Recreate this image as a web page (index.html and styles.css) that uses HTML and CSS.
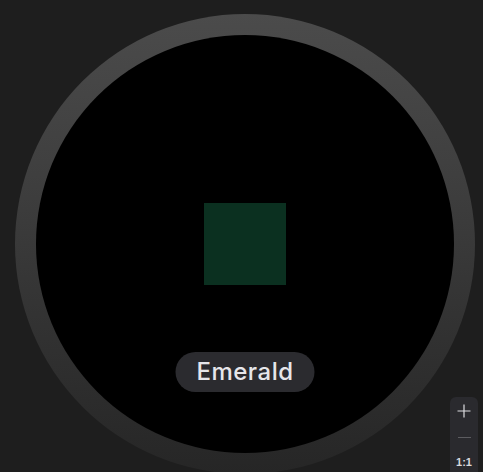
FILE: index.html
```html
<!DOCTYPE html>
<html>
<head>
<meta charset="utf-8">
<link rel="stylesheet" href="styles.css">
</head>
<body>
<main class="stage">
  <div class="dial">
    <div class="lens">
      <div class="swatch"></div>
      <div class="label">Emerald</div>
    </div>
  </div>
  <div class="zoom">
    <div class="zbtn plus"><svg width="14" height="14" viewBox="0 0 14 14"><path d="M7 0.5V13.5M0.5 7H13.5" stroke="#dcdce0" stroke-width="1.2" fill="none"/></svg></div>
    <div class="zbtn minus"><span class="bar"></span></div>
    <div class="zbtn one">1:1</div>
  </div>
</main>
</body>
</html>
```
FILE: styles.css
```css
html, body {
  margin: 0;
  padding: 0;
  background: #1e1e1e;
  width: 483px;
  height: 472px;
  overflow: hidden;
}
.stage {
  position: relative;
  width: 483px;
  height: 472px;
  padding: 14px 0 0 15px;
  box-sizing: border-box;
}
.dial {
  width: 460px;
  height: 460px;
  border-radius: 50%;
  padding: 21px;
  box-sizing: border-box;
  background: linear-gradient(to bottom, #4b4b4b 0%, #3f3f3f 35%, #353535 60%, #262626 100%);
}
.lens {
  position: relative;
  width: 418px;
  height: 418px;
  border-radius: 50%;
  background: #000;
  display: flex;
  align-items: center;
  justify-content: center;
}
.swatch {
  width: 82px;
  height: 82px;
  background: #0b3020;
}
.label {
  position: absolute;
  left: 50%;
  top: 317px;
  transform: translateX(-50%);
  height: 40px;
  width: 139px;
  box-sizing: border-box;
  text-align: center;
  border-radius: 20px;
  background: #2b2b2f;
  color: #e6e6ea;
  font-family: Inter, "Noto Sans", sans-serif;
  font-size: 24px;
  font-weight: 500;
  line-height: 40px;
  letter-spacing: 0.5px;
  white-space: nowrap;
}
.zoom {
  position: absolute;
  left: 450px;
  top: 397px;
  width: 28px;
  height: 80px;
  border-radius: 6px 6px 0 0;
  background: #2a2a2e;
  display: flex;
  flex-direction: column;
  align-items: center;
}
.zbtn {
  color: #d8d8dc;
  font-family: "Liberation Sans", sans-serif;
  display: flex;
  align-items: center;
  justify-content: center;
  width: 100%;
}
.plus {
  height: 28px;
}
.minus {
  height: 24px;
}
.bar {
  width: 13px;
  height: 1px;
  background: #5c5c60;
}
.one {
  height: 26px;
  font-size: 11px;
  font-weight: bold;
}
```
